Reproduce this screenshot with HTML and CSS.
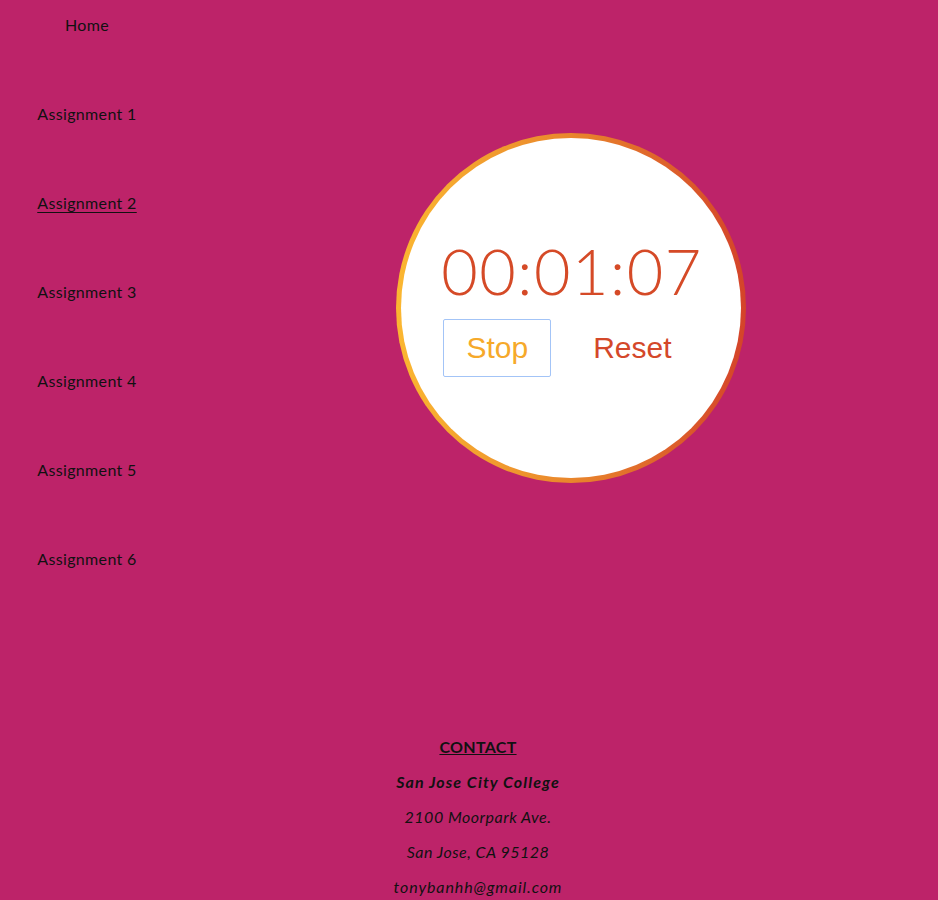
FILE: index.html
```html
<!DOCTYPE html>
<html>
<head>
<meta charset="utf-8">
<title>Stopwatch</title>
<link rel="stylesheet" href="styles.css">
</head>
<body>
<div class="page">
  <nav class="nav">
    <a class="nav-link" href="#">Home</a>
    <a class="nav-link" href="#">Assignment 1</a>
    <a class="nav-link current" href="#">Assignment 2</a>
    <a class="nav-link" href="#">Assignment 3</a>
    <a class="nav-link" href="#">Assignment 4</a>
    <a class="nav-link" href="#">Assignment 5</a>
    <a class="nav-link" href="#">Assignment 6</a>
  </nav>
  <main class="main">
    <div class="watch">
      <div class="time">00:01:07</div>
      <div class="controls">
        <button class="btn btn-stop">Stop</button>
        <button class="btn btn-reset">Reset</button>
      </div>
    </div>
  </main>
</div>
<footer class="footer">
  <p class="contact-title">CONTACT</p>
  <p class="college">San Jose City College</p>
  <p class="addr">2100 Moorpark Ave.</p>
  <p class="addr">San Jose, CA 95128</p>
  <p class="addr mail">tonybanhh@gmail.com</p>
</footer>
</body>
</html>
```
FILE: styles.css
```css
html, body {
  margin: 0;
  padding: 0;
}
body {
  background: #bd2369;
  font-family: Lato, "Noto Sans", sans-serif;
  font-size: 16px;
  color: #111;
  width: 938px;
  height: 900px;
  overflow: hidden;
}
.page {
  display: grid;
  grid-template-columns: 174px 1fr;
  height: 721px;
}
.nav {
  display: flex;
  flex-direction: column;
  align-items: center;
  padding-top: 15px;
  gap: 70px;
}
.nav-link {
  color: #111;
  text-decoration: none;
  line-height: 19px;
  font-weight: 400;
  letter-spacing: 0.35px;
}
.nav-link.current {
  text-decoration: underline;
  text-underline-offset: 3px;
}
.main {
  padding-top: 133px;
  padding-left: 222px;
}
.watch {
  box-sizing: border-box;
  width: 350px;
  height: 350px;
  border-radius: 50%;
  border: 5px solid transparent;
  background:
    linear-gradient(#fff, #fff) padding-box,
    linear-gradient(to right, #fbb731, #e9862c 50%, #d4432a) border-box;
  display: flex;
  flex-direction: column;
  align-items: center;
  padding-top: 101px;
}
.time {
  font-family: Lato, "Noto Sans", sans-serif;
  font-weight: 300;
  font-size: 63px;
  line-height: 63px;
  color: #d54a27;
  letter-spacing: 1.5px;
  margin-left: 2px;
}
.controls {
  display: flex;
  gap: 19px;
  margin-top: 17px;
  margin-right: 4px;
}
.btn {
  font-family: "Liberation Sans", Arial, sans-serif;
  font-size: 30px;
  line-height: 34px;
  padding: 11px 22px;
  background: transparent;
  border: 1px solid transparent;
  border-radius: 2px;
  margin: 0;
}
.btn-stop {
  color: #f6a92a;
  border-color: #a3c4f7;
  background: #fff;
}
.btn-reset {
  color: #d4482a;
}
.footer {
  text-align: center;
  padding-left: 18px;
}
.footer p {
  margin: 16px 0;
  line-height: 19px;
}
.contact-title {
  font-weight: 700;
  text-decoration: underline;
  letter-spacing: 0.3px;
}
.college {
  font-weight: 700;
  font-style: italic;
  letter-spacing: 1.1px;
}
.addr {
  font-style: italic;
  font-weight: 400;
  letter-spacing: 0.5px;
}
.addr.mail {
  letter-spacing: 0.9px;
}
```
